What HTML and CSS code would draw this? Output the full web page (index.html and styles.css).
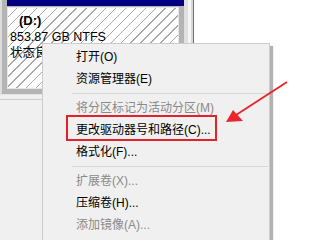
FILE: index.html
```html
<!DOCTYPE html>
<html lang="zh-CN">
<head>
    <meta charset="UTF-8">
    <title>磁盘管理 - 更改驱动器号和路径</title>
    <link rel="stylesheet" href="styles.css">
</head>
<body>

<div class="screen">
    <div class="pane">
        <div class="pane-top">
            <div class="volume">
                <div class="volume-bar"></div>
                <div class="volume-body">
                    <div class="vol-name">(D:)</div>
                    <div>853.87 GB NTFS</div>
                    <div>状态良好 (主分区)</div>
                </div>
            </div>
            <div class="scroll-edge"></div>
        </div>
        <div class="pane-rule"></div>
    </div>
</div>

<!-- 右键菜单 -->
<ul class="menu">
    <li>打开(O)</li>
    <li>资源管理器(E)</li>
    <li class="sep"></li>
    <li class="off">将分区标记为活动分区(M)</li>
    <li>更改驱动器号和路径(C)...</li>
    <li>格式化(F)...</li>
    <li class="sep"></li>
    <li class="off">扩展卷(X)...</li>
    <li>压缩卷(H)...</li>
    <li class="off">添加镜像(A)...</li>
</ul>

<div class="callout"></div>
<svg class="arrow" width="320" height="240" viewBox="0 0 320 240">
    <line x1="287" y1="82" x2="236" y2="115" stroke="#e8262c" stroke-width="2"/>
    <polygon points="226,122 233,110 243,121" fill="#e8262c"/>
</svg>

</body>
</html>
```

FILE: styles.css
```css
html {
    overflow: hidden;
}
body {
    margin: 0;
    background-color: #ffffff;
    font-family: "Liberation Sans", "Noto Sans CJK SC", sans-serif;
    font-size: 12px;
    color: #000000;
    width: 320px;
    height: 240px;
    overflow: hidden;
    position: relative;
}
.screen {
    display: flex;
    height: 240px;
}
.pane {
    width: 194px;
    background-color: #f0f0f0;
}
.pane-top {
    display: flex;
}
.volume {
    width: 177px;
    border-left: 2px solid #dcdcdc;
    border-bottom: 1px solid #e4e4e4;
    background-color: #b4b4b4;
    padding: 0 0 5px 5px;
}
.volume-bar {
    height: 6px;
    background-color: #000080; /* Navy */
}
.volume-body {
    margin: 1px 5px 0 0;
    height: 75px;
    border: 1px solid #e6e6e6;
    padding: 5px 0 0 2px;
    font-size: 12.5px;
    line-height: 16px;
    overflow: hidden;
    white-space: nowrap;
    background: repeating-linear-gradient(135deg, #ffffff 0 6px, #a8a8a8 6px 7px);
}
.vol-name {
    font-weight: bold;
    font-size: 13px;
    padding-left: 9px;
}
.scroll-edge {
    width: 10px;
    height: 90px;
    background: linear-gradient(to right, #e0e0e0 0 4px, #f6f6f6 4px 7px, #d6d6d6 7px 9px, #6e6e6e 9px 10px);
}
.pane-rule {
    margin-top: 4px;
    height: 1px;
    background-color: #cdcdcd;
}
.menu {
    position: absolute;
    left: 42px;
    top: 43px;
    width: 226px;
    height: 194px;
    margin: 0;
    padding: 2px 0 0;
    list-style: none;
    background-color: #f0f0f0;
    border: 1px solid #cccccc;
    border-bottom: none;
    box-shadow: 3px 3px 1px rgba(0, 0, 0, 0.3);
    overflow: hidden;
}
.menu li {
    height: 22px;
    line-height: 22px;
    padding-left: 33px;
    white-space: nowrap;
}
.menu li.off {
    color: #8a8a8a;
}
.menu li.sep {
    height: 1px;
    padding: 0;
    margin: 3px 1px 3px 29px;
    background-color: #d7d7d7;
}
.callout {
    position: absolute;
    left: 66px;
    top: 115px;
    width: 147px;
    height: 22px;
    border: 2px solid #e3212b;
}
.arrow {
    position: absolute;
    left: 0;
    top: 0;
}
```
